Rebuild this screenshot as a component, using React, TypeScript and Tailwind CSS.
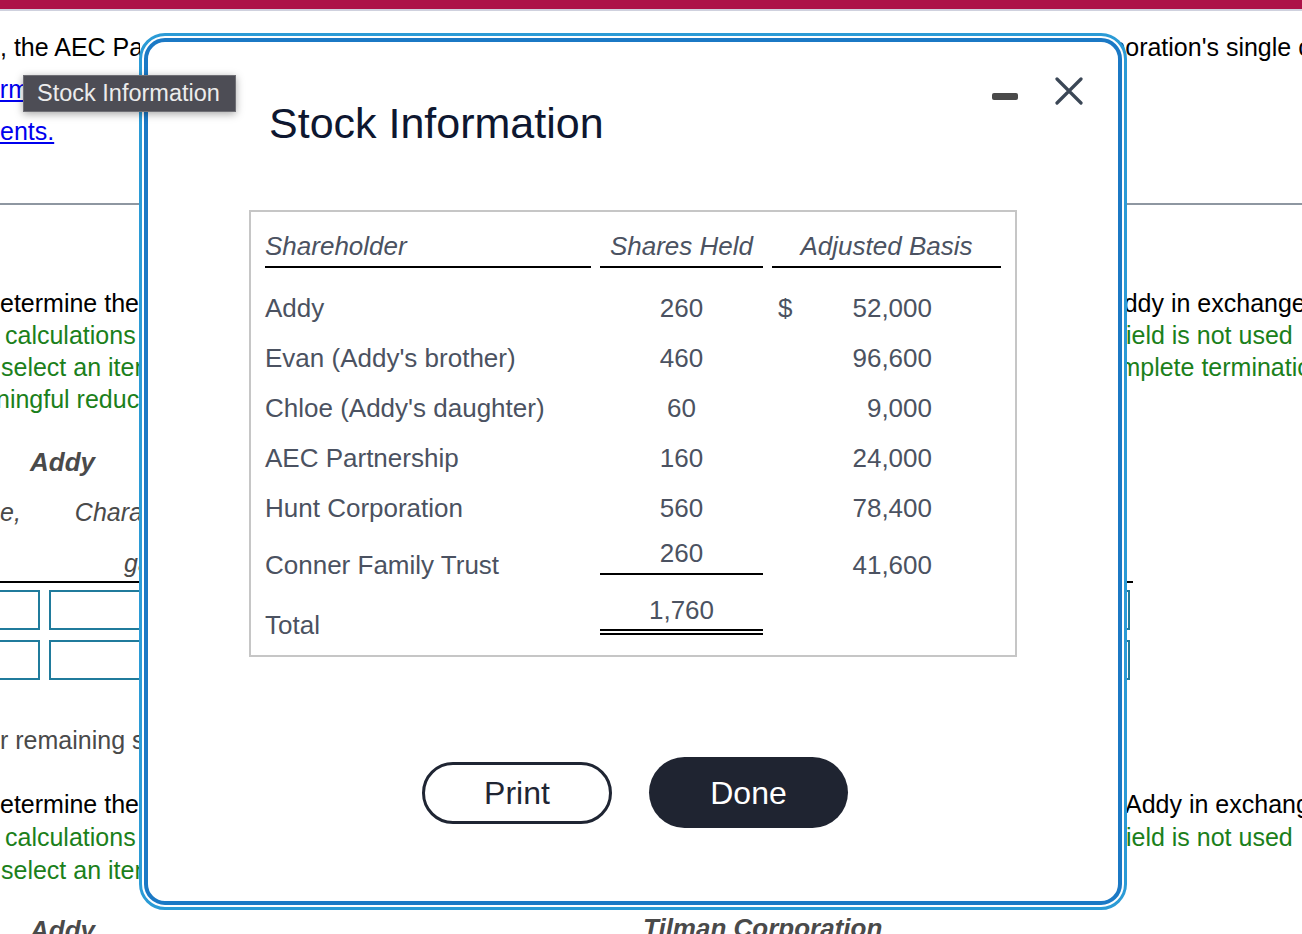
import React from "react";

const stock = [
  { name: "Addy", shares: "260", basis: "52,000", dollar: true },
  { name: "Evan (Addy's brother)", shares: "460", basis: "96,600" },
  { name: "Chloe (Addy's daughter)", shares: "60", basis: "9,000" },
  { name: "AEC Partnership", shares: "160", basis: "24,000" },
  { name: "Hunt Corporation", shares: "560", basis: "78,400" },
];

function BgRow({
  left,
  right,
  className = "",
}: {
  left?: React.ReactNode;
  right?: React.ReactNode;
  className?: string;
}) {
  return (
    <div className={`flex ${className}`}>
      <div className="w-[140px] shrink-0 overflow-hidden whitespace-nowrap">{left}</div>
      <div className="ml-auto w-[202px] shrink-0 overflow-hidden whitespace-nowrap">{right}</div>
    </div>
  );
}

function Background() {
  const green = "text-[#1b801b]";
  return (
    <div className="text-[25px] text-black">
      {/* top bars */}
      <div className="h-[9px] bg-[#ad1248]" />
      <div className="h-[2px] bg-[#cfd1de]" />

      <div className="pt-[15px] leading-[42px]">
        <BgRow
          className="h-[42px]"
          left={<span>, the AEC Partnership</span>}
          right={<span className="ml-[3px] inline-block">rporation's single class</span>}
        />
        <BgRow
          className="h-[42px]"
          left={<span className="-ml-[21px] inline-block text-[#0000ee] underline">form</span>}
        />
        <BgRow
          className="h-[42px]"
          left={<span className="text-[#0000ee] underline">ents.</span>}
        />
      </div>

      <div className="mt-[51px] h-[2px] bg-[#8e97a1]" />

      <div className="mt-[82px] leading-[32px]">
        <BgRow
          className="h-[32px]"
          left={<span>etermine the</span>}
          right={<span className="ml-[7px] inline-block">Addy in exchange for</span>}
        />
        <BgRow
          className={`h-[32px] ${green}`}
          left={<span className="pl-[5px]">calculations</span>}
          right={<span className="ml-[19px] inline-block">field is not used</span>}
        />
        <BgRow
          className={`h-[32px] ${green}`}
          left={<span className="pl-[1px]">select an item</span>}
          right={<span className="-ml-[7px] inline-block">complete termination</span>}
        />
        <BgRow
          className={`h-[32px] ${green}`}
          left={<span className="-ml-[4px] inline-block">ningful reduction</span>}
        />
      </div>

      <div className="mt-[22px] italic text-[#4a4a4a]">
        <BgRow
          className="h-[50px] leading-[50px]"
          left={<span className="pl-[30px] text-[26px] font-bold">Addy</span>}
        />
        <BgRow
          className="h-[50px] leading-[50px]"
          left={
            <span>
              e,<span className="ml-[54px]">Character</span>
            </span>
          }
        />
        <BgRow
          className="h-[44px] pt-[10px] leading-[32px]"
          left={<span className="pl-[124px]">gain</span>}
        />
      </div>
      <BgRow
        className="h-[2px]"
        left={<div className="h-[2px] bg-black" />}
        right={<div className="h-[2px] w-[33px] bg-black" />}
      />

      <BgRow
        className="mt-[7px] h-[40px]"
        left={
          <div className="flex">
            <div className="-ml-[12px] h-[40px] w-[52px] shrink-0 border-2 border-[#207b9c]" />
            <div className="ml-[9px] h-[40px] w-[200px] shrink-0 border-2 border-[#207b9c]" />
          </div>
        }
        right={<div className="h-[40px] w-[30px] border-2 border-[#207b9c]" />}
      />
      <BgRow
        className="mt-[10px] h-[40px]"
        left={
          <div className="flex">
            <div className="-ml-[12px] h-[40px] w-[52px] shrink-0 border-2 border-[#207b9c]" />
            <div className="ml-[9px] h-[40px] w-[200px] shrink-0 border-2 border-[#207b9c]" />
          </div>
        }
        right={<div className="h-[40px] w-[30px] border-2 border-[#207b9c]" />}
      />

      <BgRow
        className="mt-[44px] h-[32px] leading-[32px] text-[#4a4a4a]"
        left={<span>r remaining shares</span>}
      />

      <div className="mt-[32px] leading-[33px]">
        <BgRow
          className="h-[33px]"
          left={<span>etermine the</span>}
          right={<span className="ml-[25px] inline-block">Addy in exchange for</span>}
        />
        <BgRow
          className={`h-[33px] ${green}`}
          left={<span className="pl-[5px]">calculations</span>}
          right={<span className="ml-[19px] inline-block">field is not used</span>}
        />
        <BgRow
          className={`h-[33px] ${green}`}
          left={<span className="pl-[1px]">select an item</span>}
        />
      </div>

      <div className="mt-[28px] flex h-[30px] text-[26px] leading-[30px] font-bold italic text-[#4a4a4a]">
        <div className="w-[140px] shrink-0 overflow-hidden whitespace-nowrap pl-[30px]">Addy</div>
        <div className="-mt-[2px] whitespace-nowrap pl-[503px]">Tilman Corporation</div>
      </div>
    </div>
  );
}

function StockModal() {
  return (
    <div className="absolute left-[139px] top-[33px] h-[877px] w-[988px] rounded-[26px] border-[3px] border-[#2b9bd6] bg-white p-[2px]">
      <div className="h-full rounded-[21px] border-4 border-[#1b79c5] bg-white">
        {/* header */}
        <div className="flex items-start">
          <h2 className="ml-[121px] mt-[57px] text-[43px] font-normal leading-[48px] text-[#0e1730]">
            Stock Information
          </h2>
          <div className="ml-auto mr-[35px] mt-[35px] flex items-start gap-[37px]">
            <div className="mt-[16px] h-[7px] w-[26px] rounded-[2px] bg-[#4a4a4a]" />
            <svg width="28" height="28" viewBox="0 0 28 28" fill="none">
              <path d="M2 2 L26 26 M26 2 L2 26" stroke="#3b4756" strokeWidth="3.2" strokeLinecap="round" />
            </svg>
          </div>
        </div>

        {/* table */}
        <div className="ml-[101px] mt-[63px] w-[768px] border-2 border-[#c6c6c6] px-[14px] pb-[5px] pt-[19px] text-[26px] text-[#4b5261]">
          <div className="grid grid-cols-[326px_163px_229px] gap-x-[9px] italic leading-[30px]">
            <div className="border-b-2 border-black pb-[5px]">Shareholder</div>
            <div className="border-b-2 border-black pb-[5px] text-center">Shares Held</div>
            <div className="border-b-2 border-black pb-[5px] text-center">Adjusted Basis</div>
          </div>

          <div className="mt-[15px]">
            {stock.map((r) => (
              <div
                key={r.name}
                className="grid h-[50px] grid-cols-[326px_163px_229px] gap-x-[9px] leading-[50px]"
              >
                <div className="whitespace-nowrap">{r.name}</div>
                <div className="text-center">{r.shares}</div>
                <div className="flex justify-between pl-[6px] pr-[69px]">
                  <span>{r.dollar ? "$" : ""}</span>
                  <span>{r.basis}</span>
                </div>
              </div>
            ))}

            {/* Conner row */}
            <div className="grid grid-cols-[326px_163px_229px] items-start gap-x-[9px]">
              <div className="pt-[7px] leading-[50px]">Conner Family Trust</div>
              <div className="border-b-2 border-black text-center leading-[40px]">260</div>
              <div className="pr-[69px] pt-[7px] text-right leading-[50px]">41,600</div>
            </div>

            {/* Total row */}
            <div className="grid grid-cols-[326px_163px_229px] items-start gap-x-[9px]">
              <div className="pt-[10px] leading-[50px]">Total</div>
              <div className="border-b-[6px] border-double border-black pt-[1px] text-center leading-[38px]">
                1,760
              </div>
              <div />
            </div>
          </div>
        </div>

        {/* buttons */}
        <div className="mt-[100px] flex items-center justify-center gap-[37px] pl-[4px]">
          <button className="h-[62px] w-[190px] rounded-full border-[3px] border-[#1f2533] bg-white text-[32px] text-[#1f2533]">
            Print
          </button>
          <button className="h-[71px] w-[199px] rounded-full bg-[#1f2431] text-[32px] text-white">
            Done
          </button>
        </div>
      </div>
    </div>
  );
}

export default function App() {
  return (
    <div className="relative h-[934px] w-[1302px] overflow-hidden bg-white font-['Liberation_Sans',Arial,sans-serif]">
      <Background />
      <StockModal />
      <div className="absolute left-[23px] top-[75px] h-[37px] w-[213px] border border-[#6f6f75] bg-[#4d4d55] pl-[13px] text-[23.5px] leading-[35px] text-[#ececec] shadow-[0_2px_8px_rgba(0,0,0,0.35)]">
        Stock Information
      </div>
    </div>
  );
}
